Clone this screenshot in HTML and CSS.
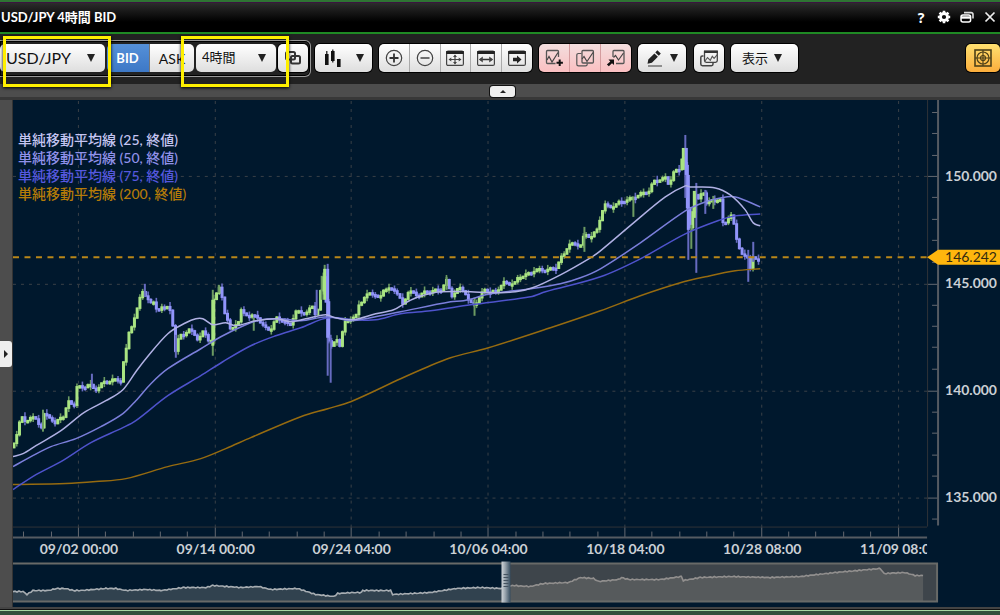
FILE: index.html
```html
<!DOCTYPE html>
<html lang="ja">
<head>
<meta charset="utf-8">
<title>USD/JPY 4時間 BID</title>
<link rel="stylesheet" href="styles.css">
</head>
<body>
<div class="window">
  <header class="titlebar">
    <h1 class="title">USD/JPY 4時間 BID</h1>
    <div class="window-actions">
      <button class="win-btn help" aria-label="ヘルプ">?</button>
      <button class="win-btn" aria-label="設定"><svg width="14" height="14" viewBox="0 0 14 14"><circle cx="7" cy="7" r="3.5" fill="none" stroke="#fff" stroke-width="2.8"/><path d="M7 0.8v2M7 11.2v2M0.8 7h2M11.2 7h2M2.6 2.6l1.5 1.5M9.9 9.9l1.5 1.5M2.6 11.4l1.5-1.5M9.9 4.1l1.5-1.5" stroke="#fff" stroke-width="2.6"/></svg></button>
      <button class="win-btn" aria-label="元に戻す"><svg width="14" height="14" viewBox="0 0 14 14"><path d="M4 2.6h7q2 0 2 2v4" fill="none" stroke="#ddd" stroke-width="1.6"/><rect x="1" y="5" width="9.6" height="7" rx="2" fill="none" stroke="#fff" stroke-width="1.5"/><path d="M1 7.500h9.600" stroke="#fff" stroke-width="2.4"/></svg></button>
      <button class="win-btn" aria-label="閉じる"><svg width="14" height="14" viewBox="0 0 14 14"><path d="M2.5 2.5l9 9M11.5 2.5l-9 9" stroke="#eee" stroke-width="1.7"/></svg></button>
    </div>
  </header>

  <div class="toolbar">
    <div class="linked">
      <span class="picker pair"><select aria-label="通貨ペア"><option>USD/JPY</option></select></span>
      <div class="sides">
        <button class="side active">BID</button><button class="side">ASK</button>
      </div>
      <span class="picker period"><select aria-label="足種"><option>4時間</option></select></span>
      <button class="btn link" aria-label="連動"><svg width="20" height="20" viewBox="0 0 20 20"><g fill="none" stroke="#333" stroke-width="2"><rect x="3" y="4" width="9" height="7.5" rx="1.5"/><rect x="8" y="8" width="9" height="7.5" rx="1.5"/></g></svg></button>
    </div>
    <button class="btn candle" aria-label="チャート種類"><svg width="18" height="20" viewBox="0 0 18 20"><g fill="#111"><path d="M1 6h3.600v11h-3.600zM7 3h3.600v10h-3.600zM13 11h3.600v8h-3.600z"/><path d="M2.200 3h1.200v4h-1.200zM8.200 1.500h1.200v13h-1.200z"/></g></svg><i class="arrow"></i></button>
    <div class="group">
      <button aria-label="拡大"><svg width="20" height="20" viewBox="0 0 20 20"><circle cx="10" cy="10" r="7.7" fill="none" stroke="#444" stroke-width="1.2"/><path d="M5.5 10h9M10 5.5v9" stroke="#333" stroke-width="1.8"/></svg></button>
      <button aria-label="縮小"><svg width="20" height="20" viewBox="0 0 20 20"><circle cx="10" cy="10" r="7.7" fill="none" stroke="#444" stroke-width="1.2"/><path d="M5.5 10h9" stroke="#444" stroke-width="1.6"/></svg></button>
      <button aria-label="全体表示"><svg width="20" height="20" viewBox="0 0 20 20"><rect x="1.6" y="3" width="16.8" height="14.4" rx="1.5" fill="none" stroke="#444" stroke-width="1.2"/><path d="M1.2 3h17.6v3h-17.6z" fill="#222"/><path d="M5 11.5h10M10 7.5v8" stroke="#444" stroke-width="1.2"/><path d="M3.5 11.5l2.800-2v4zM16.5 11.5l-2.800-2v4zM10 6.5l2 2.400h-4zM10 16.5l2-2.400h-4z" fill="#444"/></svg></button>
      <button aria-label="幅に合わせる"><svg width="20" height="20" viewBox="0 0 20 20"><rect x="1.6" y="3" width="16.8" height="14.4" rx="1.5" fill="none" stroke="#444" stroke-width="1.2"/><path d="M1.2 3h17.6v3h-17.6z" fill="#222"/><path d="M4 11.5h12" stroke="#333" stroke-width="1.5"/><path d="M2.8 11.5l4-3v6zM17.2 11.5l-4-3v6z" fill="#444"/></svg></button>
      <button aria-label="最新へ"><svg width="20" height="20" viewBox="0 0 20 20"><rect x="1.6" y="3" width="16.8" height="14.4" rx="1.5" fill="none" stroke="#444" stroke-width="1.2"/><path d="M1.2 3h17.6v3h-17.6z" fill="#222"/><path d="M6 9.800h4v-2.300l4.500 4l-4.500 4v-2.300h-4z" fill="#222"/></svg></button>
    </div>
    <div class="group pink">
      <button aria-label="指標追加"><svg width="20" height="20" viewBox="0 0 20 20"><path d="M14.5 9v-5.5q0-1-1-1h-10q-1 0-1 1v11q0 1 1 1h8" fill="none" stroke="#555" stroke-width="1.3"/><path d="M3 12l2-3.5l3 5.5l6-9.5" fill="none" stroke="#444" stroke-width="1.2"/><path d="M12.5 14.7h6.4M15.7 11.5v6.4" stroke="#111" stroke-width="2"/></svg></button>
      <button aria-label="指標複製"><svg width="20" height="20" viewBox="0 0 20 20"><path d="M6.5 5.5h-3q-1.7 0-1.7 1.7v9q0 1.7 1.7 1.7h7q1.7 0 1.7-1.7v-1" fill="none" stroke="#555" stroke-width="1.2"/><rect x="7" y="2.5" width="11.4" height="12.5" rx="1" fill="none" stroke="#555" stroke-width="1.3"/><path d="M7 11l2-2.5l3 5l6-9" fill="none" stroke="#444" stroke-width="1.2"/></svg></button>
      <button aria-label="指標移動"><svg width="20" height="20" viewBox="0 0 20 20"><path d="M7 9v-5.5q0-1 1-1h9q1 0 1 1v11q0 1-1 1h-7" fill="none" stroke="#555" stroke-width="1.3"/><path d="M7.5 9.5l2-2l3 4.5l5-7" fill="none" stroke="#444" stroke-width="1.2"/><path d="M2.5 11.5h5.5v5.5l-2-1.7l-3.2 2.9l-1.9-1.8l3.4-3z" fill="#111"/></svg></button>
    </div>
    <button class="btn pen" aria-label="描画"><svg width="18" height="20" viewBox="0 0 18 20"><path d="M11.3 2.2l3.5 3.3l-2 2.2l-3.5-3.3zM8.4 5.4l3.5 3.3l-6 6l-4.4 1l0.8-4.2z" fill="#222"/><path d="M2 18h14" stroke="#555" stroke-width="1.2"/></svg><i class="arrow"></i></button>
    <button class="btn layers" aria-label="チャート重ね"><svg width="20" height="20" viewBox="0 0 20 20"><path d="M4.500 8h-1.200q-1.500 0-1.500 1.500v6.500q0 1.700 1.700 1.700h9q1.500 0 1.500-1.700v-1" fill="none" stroke="#444" stroke-width="1.5"/><path d="M5.500 5v7.500q0 1.800 1.800 1.800h9.200q1.800 0 1.800-1.800v-9h-12.800z" fill="none" stroke="#444" stroke-width="1.3"/><path d="M5 2.500h13.800v2.500h-13.800z" fill="#333"/><path d="M6 13l2.500-3.500l2.800 2.800l2-4l1.800 2l3-3.500" fill="none" stroke="#555" stroke-width="1.1"/></svg></button>
    <button class="btn view">表示<i class="arrow"></i></button>
    <button class="btn target" aria-label="クロスライン"><svg width="20" height="20" viewBox="0 0 20 20"><g fill="none" stroke="#4d4018" stroke-width="1.2"><rect x="2" y="2" width="16" height="16" stroke-width="1.6"/><circle cx="10" cy="10" r="6"/><circle cx="10" cy="10" r="2.5"/><path d="M10 2v16M2 10h16"/></g></svg></button>
    <div class="marker marker-pair"></div>
    <div class="marker marker-period"></div>
  </div>

  <div class="fold"><button class="fold-btn" aria-label="ツールバーをたたむ"><i></i></button></div>

  <main class="workspace">
    <aside class="rail"><button class="rail-btn" aria-label="パネルを開く"><i></i></button></aside>
    <section class="chart">
      <svg class="plot" viewBox="12 100 988 508" role="img" aria-label="USD/JPY チャート">
        <defs>
          <clipPath id="dates"><path d="M12 538h915v26h-915z"/></clipPath>
          <linearGradient id="grip"><stop offset="0" stop-color="#d0d5d9"/><stop offset="0.4" stop-color="#9aa5ae"/><stop offset="1" stop-color="#354c5f"/></linearGradient>
        </defs>
        <g id="grid"></g>
        <path class="faint" d="M12 527.500H927M927.500 100V527"/>
        <path class="axis" d="M12 538H927M938 100V526"/>
        <g id="candles"></g>
        <g id="averages"></g>
        <path class="price-line" d="M12 257.500H927"/>
        <g class="prices">
          <text x="945" y="181">150.000</text><text x="945" y="288">145.000</text>
          <text x="945" y="395">140.000</text><text x="945" y="502">135.000</text>
        </g>
        <path fill="#ffb60d" d="M927 257.500L938 250H1000V265H938Z"/>
        <text class="last" x="945" y="262">146.242</text>
        <g class="dates" clip-path="url(#dates)">
          <text x="78" y="554">09/02 00:00</text><text x="215" y="554">09/14 00:00</text>
          <text x="351" y="554">09/24 04:00</text><text x="488" y="554">10/06 04:00</text>
          <text x="625" y="554">10/18 04:00</text><text x="762" y="554">10/28 08:00</text>
          <text x="899" y="554">11/09 08:00</text>
        </g>
        <g id="overview"></g>
        <rect x="509" y="564" width="428" height="38" fill="#7c726a" opacity="0.5"/>
        <path class="box" d="M12 564H937V602H12"/>
        <rect x="501" y="562" width="9" height="41" fill="url(#grip)"/>
        <path d="M503 575h5M503 578h5M503 581h5M503 584h5M503 587h5" stroke="#44525f"/>
      </svg>
      <ul class="legend">
        <li class="l25">単純移動平均線 (25, 終値)</li>
        <li class="l50">単純移動平均線 (50, 終値)</li>
        <li class="l75">単純移動平均線 (75, 終値)</li>
        <li class="l200">単純移動平均線 (200, 終値)</li>
      </ul>
    </section>
  </main>
  <footer class="edge"></footer>
</div>
<script src="chart.js"></script>
</body>
</html>
```
FILE: styles.css
```css
* { box-sizing: border-box; }
body { margin: 0; background: #33503a; font-family: Lato, "Noto Sans CJK JP", sans-serif; overflow: hidden; }
button, select { font-family: inherit; margin: 0; padding: 0; border: 0; color: #111; cursor: pointer; }
svg { display: block; }

.window { display: flex; flex-direction: column; border-top: 2px solid #2e7433; }
.titlebar { display: flex; align-items: center; justify-content: space-between; height: 32px; padding: 0 3px 2px 1px; background: linear-gradient(#2c2c2c, #000 65%); border-top: 1px solid #3b1440; border-bottom: 2px solid #1f8a24; }
.title { margin: 0; font-size: 13px; line-height: 20px; font-weight: 700; color: #fff; }
.window-actions { display: flex; gap: 9px; }
.win-btn { display: grid; place-items: center; width: 14px; height: 18px; background: none; color: #fff; }
.help { font: 700 14px "Noto Sans", sans-serif; }

.toolbar { position: relative; display: flex; align-items: center; height: 50px; padding-bottom: 2px; background: #222; }
.linked { display: flex; align-items: center; gap: 2px; height: 37px; padding: 0 2px 0 0; border: 1px solid #999; border-left: 0; border-radius: 0 6px 6px 0; margin-right: 4px; box-shadow: inset 0 0 0 1px #000; }
.picker { display: grid; align-items: center; }
.picker::after, .arrow { content: ""; border: 4px solid transparent; border-top: 8px solid #222; border-bottom: 0; }
.picker::after { grid-area: 1 / 1; justify-self: end; margin-right: 10px; pointer-events: none; }
.picker select { grid-area: 1 / 1; width: 100%; height: 28px; appearance: none; border-radius: 5px; background: linear-gradient(#fff, #dedede); }
.pair { width: 105px; }
.pair select { padding: 0 0 2px 6px; font-size: 16px; }
.period { width: 80px; }
.period select { padding: 0 0 2px 6px; font-size: 13px; }
.sides { display: flex; height: 28px; }
.side { width: 44px; background: linear-gradient(#fff, #dedede); font-size: 14px; border-radius: 0 5px 5px 0; }
.side.active { width: 43px; border-right: 1px solid #777; background: linear-gradient(#5590d8, #3d78c6); color: #fff; font-weight: 700; font-size: 13px; padding-right: 1px; border-radius: 5px 0 0 5px; }
.btn, .group { display: flex; align-items: center; justify-content: center; height: 28px; border-radius: 5px; background: linear-gradient(#fff, #dedede); box-shadow: 0 0 0 1px #000; }
.link { width: 30px; }
.candle { width: 57px; gap: 14px; margin-right: 7px; }
.group { overflow: hidden; width: 153px; margin-right: 7px; }
.group button { flex: 1; height: 28px; display: grid; place-items: center; background: none; border-left: 1px solid #aaa; }
.group button:first-child { border-left: 0; }
.pink { width: 92px; margin-right: 7px; background: linear-gradient(#f3dede, #fabfc1); }
.pink button { border-color: #d49c9e; }
.pen { width: 48px; gap: 6px; margin-right: 8px; }
.layers { width: 30px; margin-right: 7px; }
.view { width: 67px; gap: 6px; padding-right: 5px; font-size: 13px; line-height: 20px; }
.target { width: 34px; margin-left: auto; background: linear-gradient(#ffe070, #fbad3c); }
.marker { position: absolute; top: 2px; width: 108px; height: 51px; border: 3px solid #fff000; box-shadow: 0 1px 3px #000; pointer-events: none; z-index: 1; }
.marker-pair { left: 3px; }
.marker-period { left: 181px; }

.fold { display: flex; justify-content: center; height: 16px; padding: 2px 0 0 5px; background: linear-gradient(#4d4d4d 13px, #383838 13px); }
.fold-btn { display: grid; place-items: center; width: 25px; height: 11px; border-radius: 3px; background: #eee; box-shadow: 0 0 0 1px #111; }
.fold-btn i { border: 3px solid transparent; border-bottom-color: #222; border-top: 0; }

.workspace { display: flex; background: #00182d; }
.rail { flex: 0 0 12px; display: flex; align-items: center; background: #4d4d4d; border-right: 1px solid #333; }
.rail-btn { display: grid; place-items: center; width: 12px; height: 26px; background: #eee; border-radius: 0 3px 3px 0; }
.rail-btn i { border: 4px solid transparent; border-left-color: #222; border-right: 0; }
.chart { position: relative; flex: 1; min-width: 0; }
.plot { width: 100%; height: auto; }
.legend { position: absolute; top: 31px; left: 5px; margin: 0; padding: 0; list-style: none; font-size: 14px; line-height: 18px; font-weight: 500; }
.l25 { color: #c5c5f2; }
.l50 { color: #9091ea; }
.l75 { color: #5658df; }
.l200 { color: #b57b08; }

.grid-line { stroke: #394047; stroke-dasharray: 3 5; fill: none; }
.axis, .tick { stroke: #646970; fill: none; }
.axis { stroke-width: 2; stroke: #555b62; }
.faint { stroke: #2e3337; fill: none; }
.up { fill: #a9e482; }
.down { fill: #9194fa; }
.wick-up { stroke: #6c9b62; }
.wick-down { stroke: #666bc0; }
.ma { fill: none; stroke-width: 1.5; stroke-linejoin: round; }
.ma25 { stroke: #b0b1e4; }
.ma50 { stroke: #7b7fdb; }
.ma75 { stroke: #4e53cc; }
.ma200 { stroke: #966b10; }
.price-line { stroke: #b98719; stroke-width: 2; stroke-dasharray: 6 5.5; fill: none; }
.prices, .dates, .last { font-size: 14px; font-weight: 700; fill: #cbd0d5; }
.dates { text-anchor: middle; }
.last { fill: #332a10; font-weight: 400; }
.box { fill: none; stroke: #686a68; stroke-width: 2; }
.over-area { fill: #31424f; }
.over-line { fill: none; stroke: #a7adb2; stroke-width: 1.6; }

.edge { height: 7px; background: linear-gradient(#444 2px, #111 2px 3px, #a7d8a1 3px 4px, #33503a 4px); }
```
FILE: chart.js
```js
const NS = "http://www.w3.org/2000/svg";
function add(parent, name, attrs) {
  const el = document.createElementNS(NS, name);
  for (const key in attrs) el.setAttribute(key, attrs[key]);
  parent.appendChild(el);
}

// Grid lines and axis ticks
const grid = document.getElementById("grid");
[78, 215, 351, 488, 625, 762, 899].forEach(x => {
  add(grid, "path", { class: "grid-line", d: `M${x - 0.5} 101V527` });
  add(grid, "path", { class: "tick", d: `M${x - 0.5} 527V538` });
});
[176, 284, 391, 498].forEach(y => {
  add(grid, "path", { class: "grid-line", d: `M12 ${y + 0.5}H927` });
  add(grid, "path", { class: "tick", d: `M927 ${y + 0.5}H938` });
});
for (let i = -2; i < 31; i++) {
  if (i % 5) add(grid, "path", { class: "tick", d: `M${Math.round(77 + i * 27.35) + 0.5} 532V538` });
}
for (let i = -3; i < 17; i++) {
  if (i % 5) add(grid, "path", { class: "tick", d: `M932 ${Math.round(176 + i * 21.43) + 0.5}H938` });
}

// Closing levels along the time axis
const closes = [[12,447],[15,437],[18,424],[20,417],[24,422],[30,417],[35,420],[41,428],[43,415],[50,418],[55,426],[58,418],[63,416],[67,402],[73,406],[76,387],[82,388],[88,384],[94,391],[102,383],[112,380],[120,381],[122,365],[125,353],[127,335],[130,328],[133,320],[136,311],[139,298],[142,290],[145,297],[149,304],[153,301],[157,313],[161,308],[166,305],[170,313],[173,335],[175,354],[178,334],[183,337],[189,327],[196,341],[202,331],[210,346],[212,300],[215,297],[218,287],[221,295],[224,313],[228,325],[231,335],[233,322],[237,326],[240,311],[250,317],[256,315],[261,326],[270,330],[276,318],[281,320],[289,326],[295,312],[306,313],[312,306],[316,318],[319,297],[324,270],[327,338],[331,348],[336,338],[339,346],[344,323],[348,319],[355,318],[358,305],[364,298],[370,292],[379,299],[383,289],[395,290],[402,305],[408,291],[418,296],[425,292],[433,291],[440,290],[446,281],[451,296],[459,288],[464,291],[469,304],[477,302],[484,289],[490,293],[497,290],[503,283],[514,284],[518,277],[526,275],[535,270],[548,270],[556,267],[560,259],[564,254],[568,244],[580,245],[584,235],[590,237],[597,230],[601,213],[604,204],[609,208],[620,202],[630,199],[640,194],[648,192],[653,182],[660,179],[665,178],[669,186],[672,173],[680,169],[683,148],[685,175],[688,225],[691,230],[694,192],[698,200],[703,190],[706,203],[716,199],[720,200],[722,224],[726,222],[730,213],[733,222],[736,238],[740,250],[743,257],[747,257],[750,268],[753,256],[757,263],[760,257]];
function level(x) {
  let i = 1;
  while (i < closes.length - 1 && closes[i][0] < x) i++;
  const [x0, y0] = closes[i - 1], [x1, y1] = closes[i];
  return y0 + (y1 - y0) * Math.min(1, (x - x0) / (x1 - x0));
}
const candles = document.getElementById("candles");
let open = 448;
for (let i = 0; i < 273; i++) {
  const x = 13 + i * 2.74;
  const close = level(x) + Math.sin(i * 1.5) * 1.3;
  const kind = close <= open ? "up" : "down";
  const top = Math.min(open, close) - 0.7, height = Math.max(3.4, Math.abs(open - close) + 1.4);
  const reach = Math.pow(Math.abs(Math.sin(i * 5.1)), 3) * 4;
  add(candles, "path", { class: "wick-" + kind, "stroke-width": 1.6, d: `M${x} ${top - reach}V${top + height + reach * 0.8}` });
  add(candles, "rect", { class: kind, x: x - 1.5, y: top, width: 3, height });
  open = close;
}

// Long shadows
[[42,410,432,"up"],[91,374,388,"down"],[144,284,297,"down"],[175,335,358,"down"],[212,290,356,"up"],[218,285,293,"up"],[253,318,331,"up"],[316,290,315,"down"],[321,276,300,"up"],[324,265,280,"up"],[327,264,376,"down"],[330,335,383,"down"],[446,277,290,"up"],[474,298,316,"up"],[584,227,252,"up"],[633,197,217,"up"],[685,135,198,"down"],[688,180,260,"down"],[691,225,249,"up"],[696,183,273,"down"],[705,190,214,"down"],[713,196,209,"up"],[748,250,282,"down"],[753,242,262,"down"]].forEach(([x, y0, y1, kind]) => {
  add(candles, "path", { class: "wick-" + kind, "stroke-width": 2, d: `M${x} ${y0}V${y1}` });
});
// Wide-range bodies
[[212,300,346,"up"],[324,269,300,"up"],[327,269,338,"down"],[683,148,170,"up"],[686,148,175,"down"],[688,175,230,"down"],[694,191,218,"up"]].forEach(([x, y0, y1, kind]) => {
  add(candles, "rect", { class: kind, x: x - 1.5, y: y0, width: 3, height: y1 - y0 });
});

// Moving averages, drawn as smooth curves through their samples
function smooth(points) {
  let d = `M${points[0]}`;
  for (let i = 0; i < points.length - 1; i++) {
    const a = points[Math.max(0, i - 1)], b = points[i], c = points[i + 1], e = points[Math.min(points.length - 1, i + 2)];
    const step = (c[0] - b[0]) / 3;
    const s0 = (c[1] - a[1]) / (c[0] - a[0]), s1 = (e[1] - b[1]) / (e[0] - b[0]);
    d += `C${b[0] + step} ${b[1] + step * s0} ${c[0] - step} ${c[1] - step * s1} ${c[0]} ${c[1]}`;
  }
  return d;
}
const averages = {
  ma200: [[12,485],[65,484],[95,482],[125,479],[167,467],[200,459],[225,449],[250,438],[300,417],[327,409],[350,402],[400,379],[425,368],[450,358],[488,348],[550,328],[600,311],[640,296],[680,283],[705,277],[735,271],[760,269]],
  ma75: [[12,490],[35,475],[60,462],[90,443],[122,428],[135,421],[167,396],[200,376],[222,362],[250,346],[275,336],[300,328],[327,318],[355,320],[375,320],[400,314],[430,311],[470,305],[530,297],[545,292],[600,277],[640,259],[685,234],[720,220],[735,216],[760,214]],
  ma50: [[12,467],[30,457],[50,447],[75,439],[100,427],[122,414],[135,401],[150,384],[167,369],[200,349],[220,337],[245,325],[260,320],[280,319],[300,321],[327,317],[350,321],[370,318],[400,312],[450,302],[463,301],[490,294],[530,289],[560,284],[580,278],[600,269],[640,243],[685,211],[705,202],[720,198],[735,197],[760,207]],
  ma25: [[12,457],[22,454],[35,446],[60,431],[83,413],[105,401],[122,390],[135,372],[145,359],[167,334],[185,323],[195,319],[202,319],[212,325],[225,323],[235,326],[255,321],[277,319],[290,322],[305,319],[325,315],[335,318],[352,320],[375,314],[393,310],[405,303],[418,297],[440,292],[470,292],[490,293],[515,292],[532,288],[560,275],[590,258],[600,251],[632,224],[665,197],[685,186],[690,187],[715,188],[730,195],[745,210],[753,223],[760,226]]
};
for (const name in averages) {
  add(document.getElementById("averages"), "path", { class: "ma " + name, d: smooth(averages[name]) });
}

// Long-range overview
const over = [[12,592],[22,592],[26,595],[32,591],[48,591],[55,589],[65,589],[72,591],[80,591],[105,589],[115,589],[125,591],[145,590],[160,591],[183,588],[205,588],[212,586],[240,588],[258,587],[270,590],[297,589],[315,595],[333,597],[337,594],[353,593],[361,593],[362,591],[390,591],[392,595],[430,593],[455,589],[480,588],[502,589],[512,586],[530,587],[543,584],[568,583],[580,578],[593,579],[598,582],[618,580],[621,578],[628,580],[660,580],[681,577],[683,581],[700,578],[730,577],[770,578],[800,577],[835,573],[880,569],[884,574],[905,573],[915,576],[923,576]];
const trace = [];
for (let i = 0; i < over.length - 1; i++) {
  const [x0, y0] = over[i], [x1, y1] = over[i + 1];
  for (let x = x0; x < x1; x += 2) {
    trace.push(`${x} ${(y0 + (y1 - y0) * (x - x0) / (x1 - x0) + Math.sin(x * 1.3) * 0.5).toFixed(1)}`);
  }
}
trace.push("923 576");
const line = "M" + trace.join("L");
const overview = document.getElementById("overview");
add(overview, "path", { class: "over-area", d: line + "V602H12Z" });
add(overview, "path", { class: "over-line", d: line });
```
